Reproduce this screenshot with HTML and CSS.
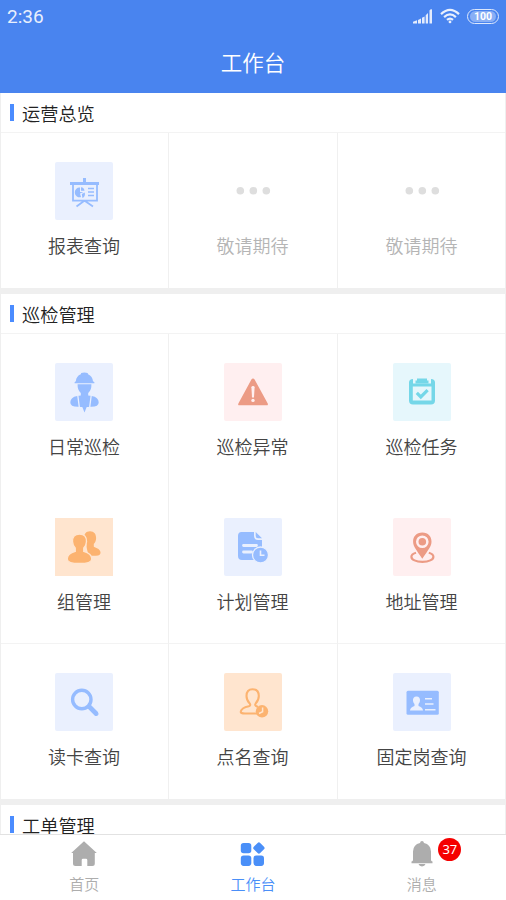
FILE: index.html
```html
<!DOCTYPE html>
<html lang="zh-CN">
<head>
<meta charset="utf-8">
<title>工作台</title>
<link rel="stylesheet" href="styles.css">
</head>
<body>
<div class="app">
  <header class="header">
    <div class="status">
      <span class="time">2:36</span>
      <svg class="signal" width="20" height="15" viewBox="0 0 20 15" fill="#e3ebfc"><path d="M0 14.5V12.8L4 11.3V14.5ZM5 14.5V11L8 9.5V14.5ZM9 14.5V8.8L11.6 7.4V14.5ZM12.7 14.5V6.3L15 4V14.5ZM16.5 14.5V1.5Q16.8 .3 19 .3V14.5Z"/></svg>
      <svg class="wifi" width="20" height="16" viewBox="0 0 20 16" fill="none" stroke="#e8effd" stroke-width="2.200"><path d="M1 6.1Q10-2.3 19 6.1M4.1 9.1Q10 3.7 15.9 9.1M7 11.9Q10 9.2 13 11.9"/><circle cx="10" cy="13.9" r="1.4" fill="#e8effd" stroke="none"/></svg>
      <span class="battery"><span class="charge">100</span></span>
    </div>
    <h1 class="title">工作台</h1>
  </header>

  <main class="content">
    <section class="section">
      <h2 class="section-title">运营总览</h2>
      <div class="grid">
        <div class="cell">
          <svg class="icon blue" viewBox="0 0 58 58"><path d="M15 20h29v3H15ZM28 16h3v4h-3Z"/><path d="M18 22v16.700h24V22M29 39l-7.500 5.500M30 39l8 5.500" fill="none" stroke="currentColor" stroke-width="1.800"/><path d="M25 25.500v4.500h3.500l-3.500 1.500 1 3.600a4.900 4.900 0 1 1-1-9.600ZM26 25.200a4 4 0 0 1 3.500 3.600H26ZM29.800 30.500l-3 1.500 .6 4q3.200-1.200 2.400-5.500Z"/><path d="M33 26.500h6M33 30h6M33 33.500h6" stroke="currentColor" stroke-width="1.400"/></svg>
          <span class="label">报表查询</span>
        </div>
        <div class="cell pending">
          <svg class="icon" viewBox="0 0 58 58"><circle cx="16.300" cy="28.800" r="3.800"/><circle cx="29.300" cy="28.800" r="3.800"/><circle cx="42.300" cy="28.800" r="3.800"/></svg>
          <span class="label">敬请期待</span>
        </div>
        <div class="cell pending">
          <svg class="icon" viewBox="0 0 58 58"><circle cx="16.300" cy="28.800" r="3.800"/><circle cx="29.300" cy="28.800" r="3.800"/><circle cx="42.300" cy="28.800" r="3.800"/></svg>
          <span class="label">敬请期待</span>
        </div>
      </div>
    </section>

    <section class="section">
      <h2 class="section-title">巡检管理</h2>
      <div class="grid">
        <div class="cell">
          <svg class="icon blue" viewBox="0 0 58 58"><path d="M19.600 19.200l1.200-1q.5-5.200 5-7l.4-1.200q3.200-.9 6.400 0l.5 1.200q4.400 1.900 4.900 7l1.400 1v1H19.600ZM22.600 21.200h13.800q.3 5.800-3.200 8.800v2.500l3.600.5q6.700 1.200 6.900 6.200.2 4.800-8.200 4.600L33 43.900h-1.300l-2.200 5.500-2.200-5.500H26l-2.500-.1q-8.400.2-8.200-4.600.2-5 6.900-6.200l3.600-.5V30q-3.500-3-3.200-8.800Z"/><path d="M22.800 32.500l1.500 11.700M36.200 32.500l-1.500 11.700" stroke="#eaf0fe" stroke-width="1.300"/></svg>
          <span class="label">日常巡检</span>
        </div>
        <div class="cell">
          <svg class="icon red" viewBox="0 0 58 58"><path d="M29 15.500q1 0 1.600 1l13 23.800q1 2-1.100 2h-27q-2.100 0-1-2L27.400 16.500q.6-1 1.600-1Z"/><path d="M27.400 24.300q0-1.200 1.600-1.200t1.600 1.200l-.6 10.200h-2Z" fill="#ffeff0"/><circle cx="29" cy="37.400" r="1.700" fill="#ffeff0"/></svg>
          <span class="label">巡检异常</span>
        </div>
        <div class="cell">
          <svg class="icon teal" viewBox="0 0 58 58"><path d="M20 16v4.400h18V16q4 0 4 3.500v18q0 4-4 4H20q-4 0-4-4v-18Q16 16 20 16ZM19.800 23.600V37.500h18.700V23.600Z" fill-rule="evenodd"/><path d="M22.500 17.500h1.500V15.500h10v2h1.500v3h-13Z"/><path d="M23.800 29.900l4 4 6.800-6.800" fill="none" stroke="currentColor" stroke-width="3.200"/></svg>
          <span class="label">巡检任务</span>
        </div>
        <div class="cell">
          <svg class="icon orange square" viewBox="0 0 58 58"><path d="M35 13.200c-4 0-6.200 2.800-5.800 7 .2 2.500 1 4.300 2.300 5.500-.1 5 1.500 12 5 12h4.500q5 0 4.500-3.600c-.5-2.500-2.600-3.800-6.700-5.400v-2.600c1.500-1.500 2.200-3.300 2.300-5.500.3-4.400-2-7.400-6.100-7.400Z"/><path d="M24.500 16c-4.900 0-7.300 3-7 7.700.2 2.700 1 4.700 2.700 6.400v3.300c-4.900 1.500-8 3.800-8 7.500 0 3.300 3.500 4.600 12.300 4.600s12.300-1.300 12.300-4.600c0-3.700-3.100-6-8-7.500v-3.300c1.700-1.700 2.500-3.700 2.700-6.400.3-4.700-2.100-7.700-7-7.700Z" stroke="#ffe5cf" stroke-width="1.400"/></svg>
          <span class="label">组管理</span>
        </div>
        <div class="cell">
          <svg class="icon blue" viewBox="0 0 58 58"><path d="M17.500 14h12.500v4q0 4 4 4h4v16q0 4-4 4H18q-4 0-4-4V18q0-4 3.500-4ZM31.700 14l6.300 6.200h-4q-2.300 0-2.300-2.200Z"/><path d="M19.500 27.500h13M19.500 34h8" stroke="#eaf0fe" stroke-width="2.800" stroke-linecap="round"/><circle cx="36.500" cy="37" r="8" stroke="#eaf0fe" stroke-width="1.300"/><path d="M36.500 32.500v4.800H40.500" fill="none" stroke="#eaf0fe" stroke-width="1.600"/></svg>
          <span class="label">计划管理</span>
        </div>
        <div class="cell">
          <svg class="icon red" viewBox="0 0 58 58"><path fill-rule="evenodd" d="M29.300 14.500c-6 0-9.200 4-9.200 9.200 0 5 3.500 8.300 9.200 17 5.700-8.700 9.200-12 9.200-17 0-5.200-3.200-9.200-9.200-9.200ZM29.300 17.500a6.300 6.300 0 1 1 0 12.600 6.300 6.300 0 0 1 0-12.600Z"/><circle cx="29.300" cy="23.800" r="3.800"/><path d="M23 34.700c-3 .9-4.600 2.200-4.600 4 0 3 4.600 5.100 11 5.100s11-2.100 11-5.100c0-1.800-1.600-3.100-4.600-4" fill="none" stroke="currentColor" stroke-width="2.200"/></svg>
          <span class="label">地址管理</span>
        </div>
        <div class="cell ruled">
          <svg class="icon blue" viewBox="0 0 58 58"><circle cx="26.800" cy="26.500" r="9.200" fill="none" stroke="currentColor" stroke-width="3.400"/><path d="M32.500 34.500l2.500-2.600 7.500 7.600q1 1.300 0 2.400-1.100 1.100-2.700 0Z" stroke="currentColor" stroke-width="1.200"/></svg>
          <span class="label">读卡查询</span>
        </div>
        <div class="cell ruled">
          <svg class="icon orange" viewBox="0 0 58 58"><path d="M36 40.500H21q-4.700 0-4.200-2c.4-2.500 3-4.200 8-5.300q2.500-.7.700-3c-2-2-3-4.200-3-7.200 0-4.300 2-6.700 6-6.700s6.300 2.400 6.300 6.700c0 3-1.100 5.200-3 7.200q-1.500 2.300.7 3L34 34" fill="none" stroke="currentColor" stroke-width="2.100"/><circle cx="38" cy="38.300" r="6.200"/><path d="M38.600 34.500v4.300l-3.600 1.700" fill="none" stroke="#ffe5cf" stroke-width="1.500"/></svg>
          <span class="label">点名查询</span>
        </div>
        <div class="cell ruled">
          <svg class="icon blue" viewBox="0 0 58 58"><rect x="13.500" y="17.700" width="32.300" height="24" rx="1.500"/><path d="M23.500 23.500c-2.600 0-3.700 1.800-3.500 4 .1 1.500.7 2.700 1.500 3.600v1.800c-2.500.9-4.500 2.100-4.500 4.600h13c0-2.500-2-3.700-4.500-4.600v-1.800c.8-.9 1.400-2.100 1.500-3.600.2-2.200-.9-4-3.500-4Z" fill="#eaf0fe"/><path d="M32 25.700h7M32 31h8.500M32 36.800h10.500" stroke="#eaf0fe" stroke-width="1.400"/></svg>
          <span class="label">固定岗查询</span>
        </div>
      </div>
    </section>

    <section class="section">
      <h2 class="section-title">工单管理</h2>
    </section>
  </main>

  <nav class="tabs">
    <a class="tab">
      <svg class="tab-icon" viewBox="0 0 28 28"><path d="M14 1.200L26.800 13H24.800V23.500q0 2.500-2.500 2.500H17.300V20q0-1.300-1.300-1.300h-3q-1.300 0-1.300 1.300v6H5.500Q3 26 3 23.500V13H1.200Z"/></svg>
      <span>首页</span>
    </a>
    <a class="tab active">
      <svg class="tab-icon" viewBox="0 0 28 28"><rect x="1.800" y="3" width="10.500" height="10.300" rx="2.800"/><rect x="1.800" y="15.600" width="10.500" height="10.300" rx="2.800"/><rect x="14.500" y="15.600" width="10.500" height="10.300" rx="2.800"/><rect x="15.400" y="3.500" width="9" height="9" rx="1.800" transform="rotate(45 19.900 8)"/></svg>
      <span>工作台</span>
    </a>
    <a class="tab">
      <svg class="tab-icon" viewBox="0 0 28 28"><path d="M14 1q1.700 0 2 2 6.800 1.500 7 8.500v8.500q0 1 1.500 1.500v1.800H3.500v-1.800Q5 21 5 20v-8.500q.2-7 7-8.500.3-2 2-2ZM10.500 24h7q-.7 2.400-3.500 2.400T10.500 24Z"/></svg>
      <span>消息</span>
      <b class="badge">37</b>
    </a>
  </nav>
</div>
</body>
</html>
```

FILE: styles.css
```css
* {
  box-sizing: border-box;
}

body {
  margin: 0;
  font-family: "Noto Sans CJK SC", sans-serif;
  font-weight: 350;
}

.app {
  display: flex;
  flex-direction: column;
  width: 506px;
  height: 900px;
  overflow: hidden;
  background: #efefef;
}

.header {
  flex: none;
  height: 93px;
  background: #4984ef;
  color: #fff;
}

.status {
  display: flex;
  align-items: center;
  height: 32px;
  padding: 0 7px;
}

.time {
  flex: 1;
  padding-top: 2px;
  font: 400 19px/32px Roboto, sans-serif;
  color: #e8effd;
}

.signal {
  margin-right: 7px;
}

.wifi {
  margin-right: 7px;
}

.battery {
  width: 32px;
  height: 15px;
  padding: 1px 2px;
  border: 1.500px solid #dce7fc;
  border-radius: 8px;
}

.charge {
  display: block;
  height: 11px;
  border-radius: 6px;
  background: #89aff5;
  color: #fff;
  font: 700 10.500px/11px Roboto, sans-serif;
  text-align: center;
}

.title {
  margin: 0;
  font-size: 21.500px;
  line-height: 60px;
  font-weight: 350;
  text-align: center;
}

.content {
  flex: 1;
  min-height: 0;
  overflow: hidden;
  display: flex;
  flex-direction: column;
  gap: 6px;
}

.section {
  flex: none;
  background: #fff;
  border: solid #efefef;
  border-width: 0 1px;
}

.section-title {
  display: flex;
  align-items: center;
  gap: 8px;
  height: 40px;
  margin: 0;
  padding: 0 0 0 9px;
  border-bottom: 1px solid #f3f3f3;
  color: #222;
  font-size: 18.200px;
  line-height: 26px;
  font-weight: 350;
}

.section-title::before {
  content: "";
  width: 4px;
  height: 17px;
  background: #4b8cff;
}

.grid {
  display: grid;
  grid-template-columns: 168px 169px 1fr;
  grid-auto-rows: 155px;
}

.cell {
  display: flex;
  flex-direction: column;
  align-items: center;
  padding: 29px 1px 0 0;
  border-right: 1px solid #f0f0f0;
  color: #444;
}

.cell:nth-child(3n) {
  padding-right: 0;
  border-right: 0;
}

.ruled {
  margin-top: -1px;
  border-top: 1px solid #f3f3f3;
}

.icon {
  width: 58px;
  height: 58px;
  border-radius: 2px;
  fill: currentColor;
}

.square {
  border-radius: 0;
}

.blue {
  color: #96bcff;
  background: #eaf0fe;
}

.red {
  color: #ec9b85;
  background: #ffeff0;
}

.teal {
  color: #75d7e8;
  background: #e6f7fc;
}

.orange {
  color: #fcb370;
  background: #ffe5cf;
}

.label {
  margin-top: 12px;
  font-size: 18px;
  line-height: 27px;
}

.pending {
  color: #b5b5b5;
}

.pending .icon {
  fill: #dedede;
}

.tabs {
  display: grid;
  grid-template-columns: repeat(3, 1fr);
  flex: none;
  height: 66px;
  border-top: 1px solid #e2e2e2;
  background: #fff;
}

.tab {
  position: relative;
  display: flex;
  flex-direction: column;
  align-items: center;
  padding-top: 5px;
  color: #adadad;
  font-size: 15px;
  line-height: 24px;
}

.tab-icon {
  width: 28px;
  height: 28px;
  margin-bottom: 4px;
  fill: currentColor;
}

.active {
  color: #4a8ff8;
}

.badge {
  position: absolute;
  top: 3px;
  left: 101px;
  width: 23px;
  height: 23px;
  border-radius: 50%;
  background: #f50000;
  color: #fff;
  font: 400 13px/23px "Noto Sans", sans-serif;
  text-align: center;
}
```
